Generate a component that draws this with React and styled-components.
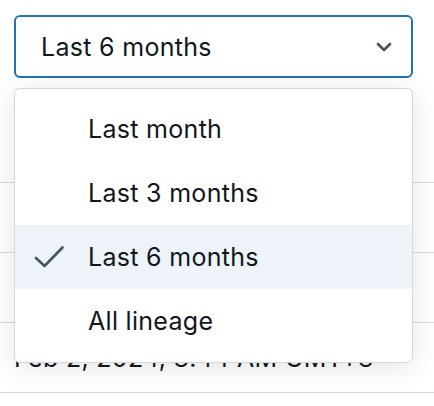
import React, { useState } from 'react';
import styled, { createGlobalStyle } from 'styled-components';

const options = ['Last month', 'Last 3 months', 'Last 6 months', 'All lineage'];
const rows = [
  'Feb 12, 2024, 9:30 AM GMT+8',
  'Feb 9, 2024, 2:17 PM GMT+8',
  'Feb 5, 2024, 11:02 AM GMT+8',
  'Feb 2, 2024, 8:44 AM GMT+8',
];

const GlobalStyle = createGlobalStyle`
  html, body {
    margin: 0;
    background: #ffffff;
  }
  body {
    font-family: Inter, 'Liberation Sans', sans-serif;
    color: #11171c;
  }
`;

const Page = styled.div`
  width: 434px;
  height: 406px;
  overflow: hidden;
  box-sizing: border-box;
  padding-top: 15px;
`;

const SelectWrap = styled.div`
  position: relative;
  margin: 0 21px 0 14px;
  z-index: 2;
`;

const Trigger = styled.button`
  display: flex;
  align-items: center;
  justify-content: space-between;
  width: 100%;
  height: 63px;
  box-sizing: border-box;
  padding: 0 19px 0 25px;
  background: #ffffff;
  border: 2.5px solid #2272b4;
  border-radius: 6px;
  font-family: inherit;
  font-size: 25px;
  letter-spacing: 0.3px;
  color: #11171c;
  cursor: pointer;
`;

const Menu = styled.ul`
  position: absolute;
  top: calc(100% + 10px);
  left: 0;
  right: 0;
  margin: 0;
  padding: 8px 0 9px;
  list-style: none;
  background: #ffffff;
  border: 1px solid #d1d9e1;
  border-radius: 6px;
  box-shadow: 0 4px 28px rgba(0, 0, 0, 0.11);
`;

const Item = styled.li`
  display: flex;
  align-items: center;
  height: 64px;
  padding-left: 19px;
  gap: 24px;
  font-size: 25px;
  letter-spacing: 0.3px;
  background: ${(p) => (p.$active ? '#eef3f9' : 'transparent')};
`;

const CheckSlot = styled.span`
  width: 30px;
  height: 24px;
  display: flex;
  align-items: center;
  justify-content: center;
`;

const Table = styled.div`
  margin-top: 36px;
`;

const Row = styled.div`
  display: flex;
  align-items: center;
  height: 70px;
  box-sizing: border-box;
  padding: 0 14px;
  border-bottom: 1px solid #d1d9e1;
  font-size: 25px;
  letter-spacing: 0.3px;
  white-space: nowrap;

  &:first-child {
    height: 69px;
  }
`;

const Chevron = () => (
  <svg width="16" height="10" viewBox="0 0 16 10" fill="none">
    <path d="M2 2 L8 8 L14 2" stroke="#445461" strokeWidth="2.6" strokeLinecap="round" strokeLinejoin="round" />
  </svg>
);

const Check = () => (
  <svg width="30" height="24" viewBox="0 0 30 24" fill="none">
    <path d="M2 13 L10.5 21 L28.5 2.5" stroke="#445461" strokeWidth="2.6" strokeLinecap="round" strokeLinejoin="round" />
  </svg>
);

const App = () => {
  const [value, setValue] = useState('Last 6 months');

  return (
    <Page>
      <GlobalStyle />
      <SelectWrap>
        <Trigger type="button">
          <span>{value}</span>
          <Chevron />
        </Trigger>
        <Menu>
          {options.map((option) => (
            <Item key={option} $active={option === value} onClick={() => setValue(option)}>
              <CheckSlot>{option === value && <Check />}</CheckSlot>
              <span>{option}</span>
            </Item>
          ))}
        </Menu>
      </SelectWrap>
      <Table>
        {rows.map((row) => (
          <Row key={row}>{row}</Row>
        ))}
      </Table>
    </Page>
  );
};

export default App;
